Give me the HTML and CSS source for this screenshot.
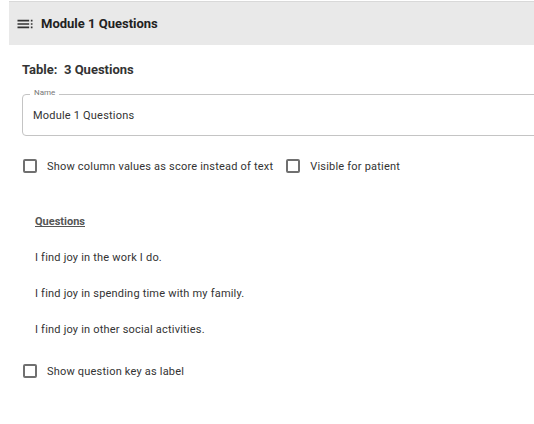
FILE: index.html
```html
<!DOCTYPE html>
<html>
<head>
<meta charset="utf-8">
<link rel="stylesheet" href="styles.css">
</head>
<body>
<div class="header">
  <svg class="header-icon" viewBox="0 0 24 24" width="20" height="20"><path fill="#333" d="M3 9h14V7H3v2zm0 4h14v-2H3v2zm0 4h14v-2H3v2zm16 0h2v-2h-2v2zm0-10v2h2V7h-2zm0 6h2v-2h-2v2z"/></svg>
  <span class="header-title">Module 1 Questions</span>
</div>
<div class="content">
  <div class="table-title">Table:&nbsp; 3 Questions</div>
  <div class="field">
    <span class="field-label">Name</span>
    <div class="field-value">Module 1 Questions</div>
  </div>
  <div class="options">
    <label class="check"><span class="box"></span>Show column values as score instead of text</label>
    <label class="check"><span class="box"></span>Visible for patient</label>
  </div>
  <div class="questions">
    <div class="q-title">Questions</div>
    <div class="q-item">I find joy in the work I do.</div>
    <div class="q-item">I find joy in spending time with my family.</div>
    <div class="q-item">I find joy in other social activities.</div>
  </div>
  <div class="options last">
    <label class="check"><span class="box"></span>Show question key as label</label>
  </div>
</div>
</body>
</html>
```
FILE: styles.css
```css
html, body {
  margin: 0;
  padding: 0;
  background: #fff;
  overflow: hidden;
  font-family: Roboto, "Liberation Sans", sans-serif;
  color: #333;
}
.header {
  margin: 1px 0 0 9px;
  height: 43px;
  border-top: 1px solid #d9d9d9;
  background: #e9e9e9;
  display: flex;
  align-items: center;
  padding-left: 6px;
}
.header-icon {
  display: block;
  margin-right: 6px;
}
.header-title {
  font-size: 13px;
  font-weight: 700;
  color: #222;
}
.content {
  padding-left: 22px;
  width: 540px;
}
.table-title {
  margin-top: 17px;
  font-size: 13px;
  line-height: 16px;
  font-weight: 700;
  color: #333;
}
.field {
  position: relative;
  margin-top: 16px;
  height: 40px;
  border: 1px solid #c4c4c4;
  border-radius: 4px;
  display: flex;
  align-items: center;
  padding-left: 10px;
}
.field-label {
  position: absolute;
  left: 7px;
  top: -7px;
  padding: 0 4px;
  background: #fff;
  font-size: 8px;
  line-height: 10px;
  color: #777;
}
.field-value {
  font-size: 11px;
  letter-spacing: 0.2px;
  color: #333;
}
.options {
  margin-top: 20px;
  display: flex;
  align-items: center;
  height: 20px;
}
.options.last {
  margin-top: 23px;
}
.check {
  display: flex;
  align-items: center;
  font-size: 11px;
  letter-spacing: 0.2px;
  color: #333;
  margin-right: 12px;
}
.box {
  width: 10px;
  height: 10px;
  border: 2px solid #707070;
  border-radius: 2px;
  margin: 0 10px 0 1px;
  flex: none;
}
.questions {
  margin-top: 38px;
  padding-left: 13px;
}
.q-title {
  font-size: 11px;
  line-height: 16px;
  font-weight: 700;
  color: #555;
  text-decoration: underline;
}
.q-item {
  font-size: 11px;
  line-height: 16px;
  letter-spacing: 0.2px;
  color: #333;
  margin-top: 20px;
}
.q-item:first-of-type {
  margin-top: 21px;
}
```
